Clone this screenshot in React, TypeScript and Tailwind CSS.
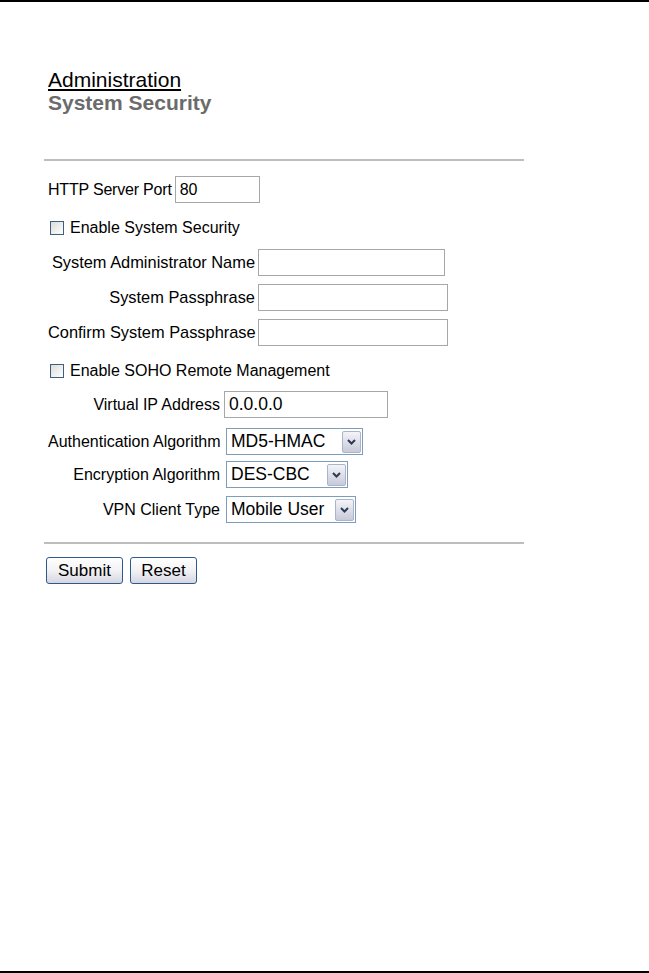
import React from "react";

const font = { fontFamily: '"Liberation Sans", Arial, sans-serif' };

function TextBox({ value, className }: { value?: string; className: string }) {
  return (
    <div
      className={
        "h-[27px] border border-[#a7a7a7] bg-white pl-[4px] flex items-center text-black " +
        className
      }
    >
      {value}
    </div>
  );
}

function Chevron() {
  return (
    <svg width="9" height="6" viewBox="0 0 9 6">
      <path d="M1 1 L4.5 4.5 L8 1" fill="none" stroke="#2b3a55" strokeWidth="2" />
    </svg>
  );
}

function SelectBox({ value, className }: { value: string; className: string }) {
  return (
    <div
      className={
        "h-[27px] border border-[#7f9db9] bg-white flex items-center justify-between pl-[4px] pr-[1px] text-[17.5px] text-black " +
        className
      }
    >
      <span className="whitespace-nowrap">{value}</span>
      <span className="w-[19px] h-[22px] border border-[#a9b5cc] rounded-[2px] bg-gradient-to-b from-[#f4f4f8] to-[#c7cad8] flex items-center justify-center">
        <Chevron />
      </span>
    </div>
  );
}

function CheckRow({ label, className }: { label: string; className: string }) {
  return (
    <div className={"flex items-center h-[28px] pl-[6px] " + className}>
      <span className="w-[14px] h-[14px] border border-[#3f5f80] bg-gradient-to-br from-[#dcdcd7] to-[#ffffff]" />
      <span className="ml-[6px] text-[16px] text-black">{label}</span>
    </div>
  );
}

function Rule({ className }: { className: string }) {
  return <div className={"w-[480px] h-[2px] bg-[#bdbdbd] " + className} />;
}

function PushButton({ label, className }: { label: string; className: string }) {
  return (
    <button
      className={
        "h-[27px] rounded-[3px] border border-[#2c5a8c] bg-gradient-to-b from-[#ffffff] via-[#f2f2f5] to-[#d5d6e2] text-[17px] text-black " +
        className
      }
    >
      {label}
    </button>
  );
}

export default function App() {
  return (
    <div className="w-[649px] h-[973px] bg-white border-t-2 border-b-2 border-black" style={font}>
      <div className="pl-[44px] pt-[66px]">
        <div className="pl-[4px]">
          <div className="text-[21px] leading-[23px] text-black underline underline-offset-2">
            Administration
          </div>
          <div className="text-[21px] leading-[24px] font-bold text-[#6b6b6b]">System Security</div>
        </div>

        <Rule className="mt-[44px]" />

        {/* HTTP port */}
        <div className="mt-[15px] pl-[4px] flex items-center text-black">
          <span className="mr-[3px] text-[16px] tracking-[-0.2px]">HTTP Server Port</span>
          <TextBox value="80" className="w-[85px] text-[16px]" />
        </div>

        <CheckRow label="Enable System Security" className="mt-[11px]" />

        {/* system security fields */}
        <div className="mt-[7px] pl-[4px] grid grid-cols-[207px_auto] gap-x-[3px] gap-y-[8px] items-center text-[16.4px] text-black">
          <span className="text-right whitespace-nowrap">System Administrator Name</span>
          <TextBox className="w-[187px]" />
          <span className="text-right whitespace-nowrap">System Passphrase</span>
          <TextBox className="w-[190px]" />
          <span className="text-right whitespace-nowrap">Confirm System Passphrase</span>
          <TextBox className="w-[190px]" />
        </div>

        <CheckRow label="Enable SOHO Remote Management" className="mt-[11px]" />

        {/* SOHO remote management */}
        <div className="mt-[6px] pl-[4px] text-[16px] text-black">
          <div className="flex items-center">
            <span className="w-[172px] text-right whitespace-nowrap">Virtual IP Address</span>
            <TextBox value="0.0.0.0" className="ml-[4px] w-[164px] text-[17.5px]" />
          </div>
          <div className="flex items-center mt-[10px]">
            <span className="w-[172px] text-right whitespace-nowrap">Authentication Algorithm</span>
            <SelectBox value="MD5-HMAC" className="ml-[6px] w-[137px]" />
          </div>
          <div className="flex items-center mt-[6px]">
            <span className="w-[172px] text-right whitespace-nowrap">Encryption Algorithm</span>
            <SelectBox value="DES-CBC" className="ml-[6px] w-[122px]" />
          </div>
          <div className="flex items-center mt-[8px]">
            <span className="w-[172px] text-right whitespace-nowrap">VPN Client Type</span>
            <SelectBox value="Mobile User" className="ml-[6px] w-[130px]" />
          </div>
        </div>

        <Rule className="mt-[19px]" />

        <div className="mt-[13px] pl-[2px] flex gap-[7px]">
          <PushButton label="Submit" className="w-[77px]" />
          <PushButton label="Reset" className="w-[67px]" />
        </div>
      </div>
    </div>
  );
}
